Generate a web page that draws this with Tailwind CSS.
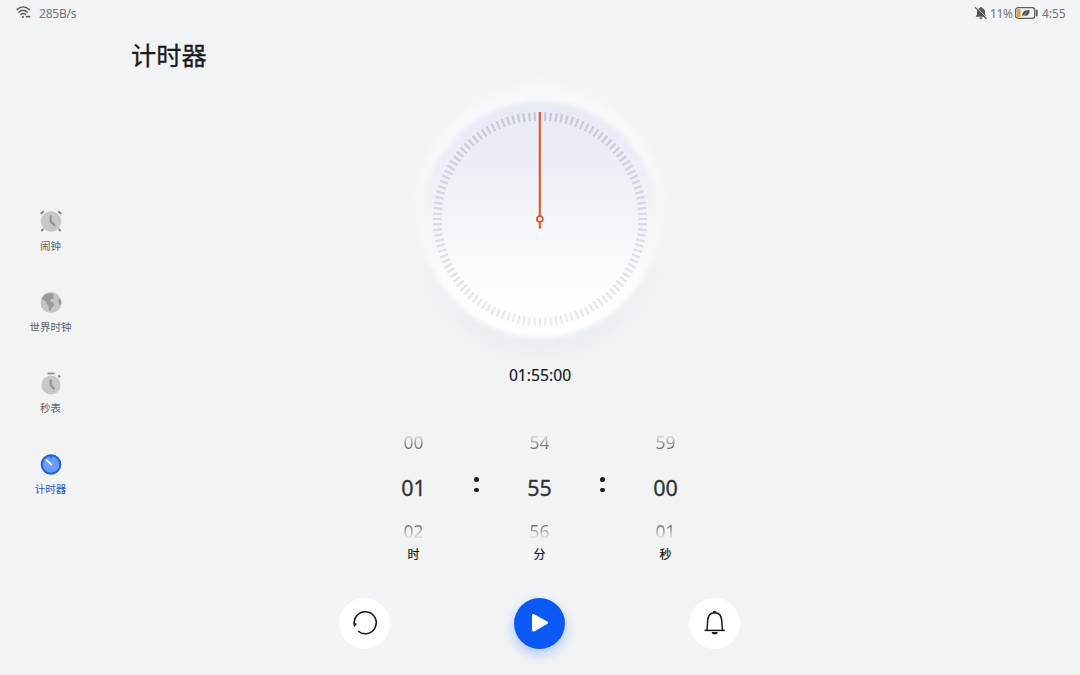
<!DOCTYPE html>
<html lang="zh-CN">
<head>
  <meta charset="UTF-8" />
  <meta name="viewport" content="width=device-width, initial-scale=1.0"/>
  <title>计时器</title>
  <script src="https://cdn.jsdelivr.net/npm/@tailwindcss/browser@4"></script>
</head>
<body class="h-screen overflow-hidden bg-[#f1f3f5] font-['Noto_Sans','Noto_Sans_CJK_SC',sans-serif] text-[#191a1c]">

  <!-- Status bar -->
  <header class="flex h-[27px] items-center justify-between pl-4 pr-[13px] text-[12px] text-[#737578]">
    <div class="flex items-center gap-2">
      <svg class="mb-[2px] h-[13px] w-[15px]" viewBox="0 0 15 13" fill="none" stroke="#56585b" stroke-width="1.4" stroke-linecap="round">
        <path d="M1 3.6C4.8.2 9.6.2 13.3 3.6M2.8 6.2c2.8-2.4 6-2.4 8.7 0M4.8 8.6c1.5-1.3 3.2-1.3 4.6-.2" />
        <circle cx="7" cy="11" r="1" fill="#56585b" stroke="none" />
        <path d="M10.7 10.7h2.7" stroke-width="1.8" />
      </svg>
      <span class="tracking-[-0.2px]">285B/s</span>
    </div>
    <div class="flex items-center">
      <svg class="mb-[2px] h-[14px] w-[14px]" viewBox="0 0 14 14">
        <path d="M7 1a1 1 0 0 1 1 .9c1.900.5 3 2 3 4v2.600l1.400 2.300H1.600L3 8.500V5.900c0-2 1.100-3.500 3-4A1 1 0 0 1 7 1ZM5.400 11.500h3.200a1.600 1.600 0 0 1-3.200 0Z" fill="#515356" />
        <path d="M2 .8 13 12" stroke="#f1f3f5" stroke-width=".8" />
        <path d="M1.200 1.300 12.400 12.800" stroke="#515356" stroke-width="1.200" />
      </svg>
      <span class="ml-[2px] w-[24px] tracking-[-0.4px]">11%</span>
      <svg class="mb-[2px] ml-[1px] h-[12px] w-[23px]" viewBox="0 0 23 12">
        <rect x=".7" y=".7" width="19" height="10.600" rx="2.300" fill="none" stroke="#5c5e61" stroke-width="1.300" />
        <rect x="2" y="2" width="3.600" height="8" rx=".6" fill="#f79a2e" />
        <path d="M7.500 9.500C6.600 5.500 9 3.200 14.500 3c.2 4.200-2 6.500-5.600 5.700L7.500 9.500Z" fill="#515356" />
        <path d="m7.800 9.300 3.800-3.500" stroke="#f1f3f5" stroke-width=".6" />
        <path d="M21.700 3.500v5" stroke="#5c5e61" stroke-width="1.800" stroke-linecap="round" />
      </svg>
      <span class="ml-[4px] w-[25px] tracking-[-0.1px]">4:55</span>
    </div>
  </header>

  <div class="grid grid-cols-[101px_1fr_101px]">

    <!-- Side navigation -->
    <nav class="flex flex-col items-center pt-[182px] text-[10.500px] text-[#606266]">
      <a class="flex h-[81px] flex-col items-center">
        <svg class="h-6 w-6" viewBox="0 0 24 24" fill="none">
          <path d="m1.700 5 3-2.700M22.300 5l-3-2.700M4.300 20l-2 2M19.700 20l2 2" stroke="#7f8183" stroke-width="1.900" />
          <circle cx="12" cy="12.500" r="10.200" fill="#c5c7c9" />
          <path d="M11.700 6.500v6l4.300 4.300" stroke="#8f9193" stroke-width="2" />
        </svg>
        <span class="mt-[5px] leading-4">闹钟</span>
      </a>
      <a class="flex h-[81px] flex-col items-center">
        <svg class="h-6 w-6" viewBox="0 0 24 24">
          <circle cx="12" cy="12.500" r="10.500" fill="#c3c5c7" />
          <path d="M3.500 7.200 6.200 4.500l4.600-1.600 4.700 1.300-1.500 1.600.8 2.100-3.300 1.500-.7 1.500 3.800 1.800.8 2.300-2.800 3-.9 3-1.900-.9-.2-4.200-2-2.100-.3-2.200L3 9.200ZM19.300 9.500l2.200-.4c.9 2.300.9 4.400.2 6.200l-1.900-1Z" fill="#97999b" />
        </svg>
        <span class="mt-[5px] leading-4">世界时钟</span>
      </a>
      <a class="flex h-[81px] flex-col items-center">
        <svg class="h-6 w-6" viewBox="0 0 24 24" fill="none">
          <path d="M8.500 2.500h7" stroke="#8b8d8f" stroke-width="1.800" />
          <path d="m19.300 4.500 1.700 1.700" stroke="#8b8d8f" stroke-width="2" />
          <circle cx="12" cy="14" r="9.500" fill="#c5c7c9" />
          <path d="M11.700 8.500v5.700l3.900 4" stroke="#8f9193" stroke-width="2" />
        </svg>
        <span class="mt-[5px] leading-4">秒表</span>
      </a>
      <a class="flex h-[81px] flex-col items-center text-[#1a56dc]">
        <svg class="h-6 w-6" viewBox="0 0 24 24" fill="none">
          <circle cx="12" cy="12.500" r="9.300" fill="#6c9dfa" stroke="#1c5be6" stroke-width="2" />
          <path d="M12 3v3.500" stroke="#1c5be6" stroke-width="1.800" />
          <path d="m7.300 8 5 4.700" stroke="#fff" stroke-width="1.800" stroke-linecap="round" />
        </svg>
        <span class="mt-[5px] leading-4">计时器</span>
      </a>
    </nav>

    <!-- Timer -->
    <main class="flex flex-col items-center">
      <h1 class="h-[73px] w-full pl-[30px] pt-[8px] text-[25.200px] leading-[38px] font-['Noto_Sans_CJK_SC',sans-serif] [-webkit-text-stroke:0.3px_#191a1c]">计时器</h1>

      <svg class="h-[238px] w-[238px] overflow-visible" viewBox="-119 -119 238 238">
        <defs>
          <linearGradient id="face" x1="0" y1="0" x2="0" y2="1">
            <stop offset="0" stop-color="#e6eaf4" />
            <stop offset=".25" stop-color="#eceef5" />
            <stop offset=".5" stop-color="#f3f5f8" />
            <stop offset=".8" stop-color="#fcfdfe" />
            <stop offset="1" stop-color="#ffffff" />
          </linearGradient>
          <linearGradient id="ticks" gradientUnits="userSpaceOnUse" x1="0" y1="-107" x2="0" y2="107">
            <stop offset="0" stop-color="#c2c8d9" />
            <stop offset=".5" stop-color="#d5d9e4" />
            <stop offset="1" stop-color="#e8eaee" />
          </linearGradient>
          <filter id="glow" x="-30%" y="-30%" width="160%" height="160%"><feGaussianBlur stdDeviation="9" /></filter>
          <filter id="soft" x="-10%" y="-10%" width="120%" height="120%"><feGaussianBlur stdDeviation="2.500" /></filter>
        </defs>
        <circle cy="17" r="115" fill="#e7ecf0" filter="url(#glow)" />
        <circle cy="-9" r="121" fill="#fbfcfd" opacity=".9" filter="url(#glow)" />
        <circle r="118" fill="url(#face)" filter="url(#soft)" />
        <circle r="102.700" fill="none" stroke="url(#ticks)" stroke-width="8.600" pathLength="360" stroke-dasharray="1.200 1.800" stroke-dashoffset=".6" />
        <path d="M-.2-107V-3M-.2 3V9.500" stroke="#e5512a" stroke-width="2.100" />
        <circle cx="-.2" r="2.900" fill="#fff" stroke="#e5512a" stroke-width="1.800" />
      </svg>

      <p class="mt-[25px] text-[15.700px] leading-6 [-webkit-text-stroke:0.2px_#191a1c]">01:55:00</p>

      <!-- Hour / minute / second wheels -->
      <div class="mt-[43px] flex pr-[1px]">
        <div class="flex w-[52px] flex-col items-center">
          <span class="h-6 bg-linear-to-b from-[#6c6e71]/10 from-20% to-[#6c6e71] to-75% bg-clip-text text-[17.500px] leading-6 text-transparent">00</span>
          <span class="mt-[16px] mb-[14px] text-[21.500px] leading-[35px] text-[#333437] [-webkit-text-stroke:0.3px_#333437]">01</span>
          <span class="h-6 bg-linear-to-b from-[#6c6e71] from-25% to-[#6c6e71]/10 to-80% bg-clip-text text-[17.500px] leading-6 text-transparent">02</span>
          <span class="mt-px text-[12px] leading-[22px] [-webkit-text-stroke:0.2px_#191a1c]">时</span>
        </div>
        <div class="flex w-[74px] flex-col items-center gap-[6px] pt-[47px]">
          <i class="h-[4.500px] w-[4.500px] rounded-full bg-[#191a1c]"></i>
          <i class="h-[4.500px] w-[4.500px] rounded-full bg-[#191a1c]"></i>
        </div>
        <div class="flex w-[52px] flex-col items-center">
          <span class="h-6 bg-linear-to-b from-[#6c6e71]/10 from-20% to-[#6c6e71] to-75% bg-clip-text text-[17.500px] leading-6 text-transparent">54</span>
          <span class="mt-[16px] mb-[14px] text-[21.500px] leading-[35px] text-[#333437] [-webkit-text-stroke:0.3px_#333437]">55</span>
          <span class="h-6 bg-linear-to-b from-[#6c6e71] from-25% to-[#6c6e71]/10 to-80% bg-clip-text text-[17.500px] leading-6 text-transparent">56</span>
          <span class="mt-px text-[12px] leading-[22px] [-webkit-text-stroke:0.2px_#191a1c]">分</span>
        </div>
        <div class="flex w-[74px] flex-col items-center gap-[6px] pt-[47px]">
          <i class="h-[4.500px] w-[4.500px] rounded-full bg-[#191a1c]"></i>
          <i class="h-[4.500px] w-[4.500px] rounded-full bg-[#191a1c]"></i>
        </div>
        <div class="flex w-[52px] flex-col items-center">
          <span class="h-6 bg-linear-to-b from-[#6c6e71]/10 from-20% to-[#6c6e71] to-75% bg-clip-text text-[17.500px] leading-6 text-transparent">59</span>
          <span class="mt-[16px] mb-[14px] text-[21.500px] leading-[35px] text-[#333437] [-webkit-text-stroke:0.3px_#333437]">00</span>
          <span class="h-6 bg-linear-to-b from-[#6c6e71] from-25% to-[#6c6e71]/10 to-80% bg-clip-text text-[17.500px] leading-6 text-transparent">01</span>
          <span class="mt-px text-[12px] leading-[22px] [-webkit-text-stroke:0.2px_#191a1c]">秒</span>
        </div>
      </div>

      <!-- Controls -->
      <div class="mt-[31.500px] flex gap-[124px] pr-[1px]">
        <button class="flex h-[51px] w-[51px] items-center justify-center rounded-full bg-white">
          <svg class="h-7 w-7" viewBox="0 0 28 28" fill="none">
            <path d="M3.600 16.500A11 11 0 1 1 7 22" stroke="#191a1c" stroke-width="1.600" />
            <path d="m2.300 13.800 3.800 1-2.900 3.300Z" fill="#191a1c" />
          </svg>
        </button>
        <button class="flex h-[51px] w-[51px] items-center justify-center rounded-full bg-[#0a59f7] shadow-[0_5px_12px_rgba(10,89,247,0.3)]">
          <svg class="h-6 w-6" viewBox="0 0 24 24">
            <path d="M5.500 4.500v14.600L18.500 11.800Z" fill="#fff" stroke="#fff" stroke-width="3" stroke-linejoin="round" />
          </svg>
        </button>
        <button class="flex h-[51px] w-[51px] items-center justify-center rounded-full bg-white">
          <svg class="h-7 w-7" viewBox="0 0 28 28" fill="none" stroke="#191a1c" stroke-width="1.500">
            <path d="M6 21.200 6.700 11.500C7 6.600 9.500 3.800 13.700 3.800s6.700 2.800 7 7.700l.7 9.700" />
            <path d="M3.500 21.400h20.400" />
            <path d="M11.700 3.600a2 1.800 0 0 1 4 0ZM10.700 23h6a3 2.300 0 0 1-6 0Z" fill="#191a1c" stroke="none" />
          </svg>
        </button>
      </div>
    </main>
  </div>

</body>
</html>
